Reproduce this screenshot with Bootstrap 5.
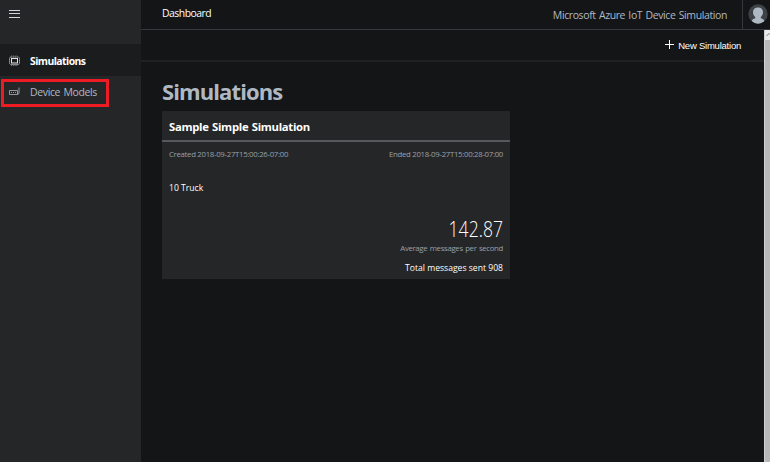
<!DOCTYPE html>
<html lang="en">
<head>
<meta charset="utf-8">
<meta name="viewport" content="width=device-width, initial-scale=1">
<title>Microsoft Azure IoT Device Simulation</title>
<link href="https://cdn.jsdelivr.net/npm/bootstrap@5.3.0/dist/css/bootstrap.min.css" rel="stylesheet">
<style>
body{background:#131517;color:#fff;font-family:"Open Sans","Noto Sans",sans-serif;font-size:11px;line-height:16px;overflow:hidden}
.shell{height:462px}
.side{width:141px;background:#252628}
.menu-btn{height:44px;padding:9px 0 0 9px!important;line-height:0}
.side .nav-link{height:31px;padding:0 0 0 8px;color:#afb9c3;font-size:10.5px;line-height:16px}
.side .nav-link svg{margin-right:9px}
.side .nav-link.active{background:#1b1c1e;color:#fff;font-weight:700;height:32px;padding-top:1px}
.lbl{white-space:nowrap}
.sims{font-size:10.4px;letter-spacing:-.55px}
.models{letter-spacing:-.37px;word-spacing:1px}
.marked{position:relative}
.marked::after{content:"";position:absolute;left:1px;top:3px;width:108px;height:28px;border:3px solid #ed1c24}
.topbar{height:30px;border-bottom:1px solid #36383b}
.crumb{padding-left:21px;padding-bottom:3px;font-size:10.4px;letter-spacing:-.5px}
.product{color:#afb9c3;font-size:10.5px;letter-spacing:-.39px;word-spacing:.9px;padding-right:15px}
.avatar{width:28px;border-left:1px solid #36383b;padding-left:5px;padding-bottom:1px}
.tools{height:32px;border-bottom:2px solid #1f2123}
.newsim{font-family:"Liberation Sans",Arial,sans-serif;font-size:9.5px;line-height:12px;letter-spacing:-.23px;margin-right:23px}
.newsim svg{margin-right:3px}
.newsim span{padding-top:1px}
.content{padding:14px 0 0 21px}
h1{font-size:22px;line-height:30px;height:35px;font-weight:700;letter-spacing:-.9px;color:#afb9c3;margin:0}
.sim{width:348px;height:168px;background:#252628;color:#fff;border:0;border-radius:0}
.sim .card-header{height:31px;padding:2px 7px 0;border-bottom:2px solid #55585d;border-radius:0!important;background:none;font-size:11.3px;letter-spacing:-.3px;word-spacing:.8px;font-weight:700}
.sim .card-body{padding:4px 7px 0}
.dim{color:#98a0a8;font-size:7.8px;letter-spacing:-.3px}
.trucks{font-size:8.6px;margin-top:18px}
.figure-num{font-size:22px;line-height:22px;font-weight:300;margin-top:21px;transform:scaleX(.8);transform-origin:right}
.avg{line-height:11px;margin-top:4px;letter-spacing:-.33px;word-spacing:.7px}
.total{font-size:8.6px;line-height:12px;margin-top:8px}
.scroll{width:6px;background:#b7b8ba;border-left:1px solid #d0d1d3}
.scroll div{height:10px;background:#e9eaeb;line-height:0}
</style>
<script src="https://cdn.jsdelivr.net/npm/bootstrap@5.3.0/dist/js/bootstrap.bundle.min.js"></script>
</head>
<body>
<div class="shell d-flex">
  <nav class="side flex-shrink-0">
    <button class="menu-btn btn border-0 d-flex align-items-start" aria-label="Menu"><svg width="11" height="10" fill="none" stroke="#d2d6da"><path d="M0 1.500h11M0 4.500h11M0 8.500h11"/></svg></button>
    <div class="nav flex-column">
      <a class="nav-link active d-flex align-items-center" href="#"><svg width="13" height="12" fill="none"><rect x="1.500" y="2" width="10" height="7.500" rx="1.500" stroke="#a9acaf" stroke-dasharray="1.500 .5"/><path d="M3 1h7M3 10.500h7" stroke="#77797c" stroke-dasharray="1 .8"/><rect x="3.500" y="3.500" width="6" height="4.500" stroke="#e2e4e6"/></svg><span class="lbl sims">Simulations</span></a>
      <a class="nav-link marked d-flex align-items-center" href="#"><svg width="13" height="12" fill="none" stroke="#9da5ad" stroke-width=".9"><path d="M1.500 4.500h8v4h-8zM9.500 8.500l1.500-1v-6M3 6.500h1M5 6.500h1M7 6.500h1"/></svg><span class="lbl models">Device Models</span></a>
    </div>
  </nav>
  <div class="flex-grow-1 d-flex flex-column">
    <header class="topbar d-flex align-items-stretch flex-shrink-0">
      <div class="crumb d-flex align-items-center me-auto">Dashboard</div>
      <div class="product d-flex align-items-center">Microsoft Azure IoT Device Simulation</div>
      <div class="avatar d-flex align-items-center"><svg width="20" height="20" class="flex-shrink-0"><circle cx="10" cy="10" r="9.700" fill="#3e4247"/><path d="M10 3.500c3.200 0 5 2 5 4.800 0 2-.9 3.600-2.200 4.600v1.300c1.800.5 3 1.300 3.500 2.800A9.700 9.700 0 0 1 10 19.700 9.700 9.700 0 0 1 3.700 17c.5-1.500 1.700-2.300 3.500-2.800v-1.300C5.900 11.900 5 10.300 5 8.300 5 5.500 6.800 3.500 10 3.500z" fill="#afb9c3"/></svg></div>
    </header>
    <div class="d-flex flex-grow-1">
      <main class="flex-grow-1">
        <div class="tools d-flex justify-content-end align-items-center">
          <button class="newsim btn border-0 p-0 d-flex align-items-center text-white"><svg width="10" height="10" stroke="#fff"><path d="M4.500 0v9M0 4.500h9"/></svg><span>New Simulation</span></button>
        </div>
        <div class="content">
          <h1>Simulations</h1>
          <section class="sim card">
            <div class="card-header d-flex align-items-center">Sample Simple Simulation</div>
            <div class="card-body">
              <div class="dim d-flex justify-content-between"><span>Created 2018-09-27T15:00:26-07:00</span><span>Ended 2018-09-27T15:00:28-07:00</span></div>
              <div class="trucks">10 Truck</div>
              <div class="figure-num text-end">142.87</div>
              <div class="dim avg text-end">Average messages per second</div>
              <div class="total text-end">Total messages sent 908</div>
            </div>
          </section>
        </div>
      </main>
      <div class="scroll flex-shrink-0"><div><svg width="5" height="10" fill="none" stroke="#77797c"><path d="M1.500 6L4 3.500 5 4.500"/></svg></div></div>
    </div>
  </div>
</div>
</body>
</html>
